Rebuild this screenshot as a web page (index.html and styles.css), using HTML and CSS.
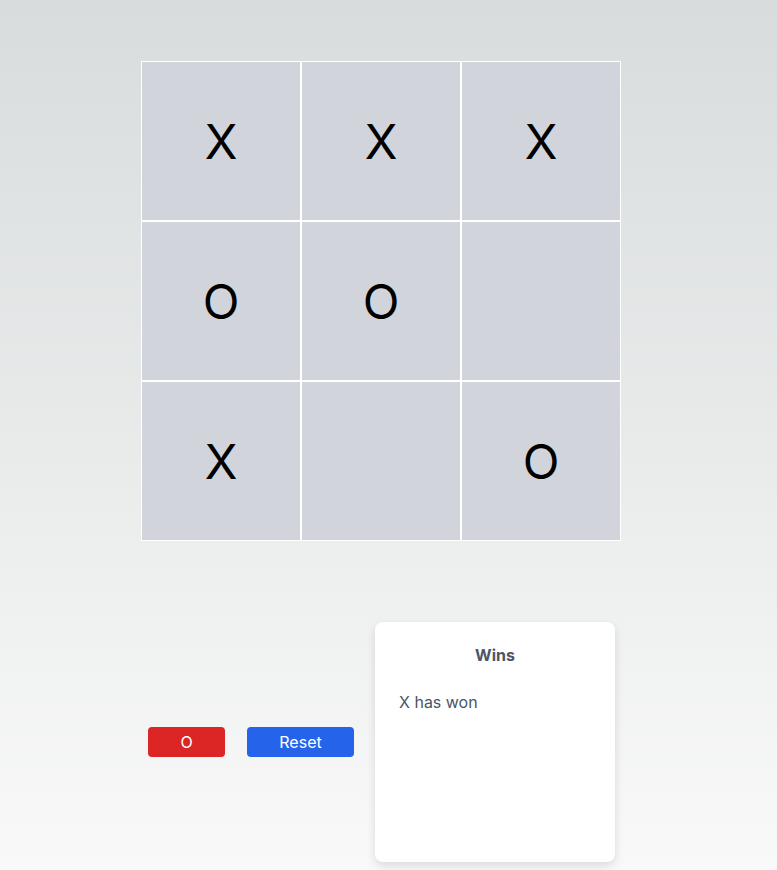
FILE: index.html
```html
<!DOCTYPE html>
<html>
<head>
<meta charset="utf-8">
<link rel="stylesheet" href="styles.css">
</head>
<body>
<div class="page">
  <div class="board">
    <div class="cell">X</div>
    <div class="cell">X</div>
    <div class="cell">X</div>
    <div class="cell">O</div>
    <div class="cell">O</div>
    <div class="cell"></div>
    <div class="cell">X</div>
    <div class="cell"></div>
    <div class="cell">O</div>
  </div>
  <div class="controls">
    <button class="btn btn-turn">O</button>
    <button class="btn btn-reset">Reset</button>
    <div class="card">
      <div class="card-title">Wins</div>
      <div class="card-text">X has won</div>
    </div>
  </div>
</div>
</body>
</html>
```
FILE: styles.css
```css
html, body {
  margin: 0;
  padding: 0;
}
body {
  font-family: Inter, "Noto Sans", sans-serif;
  background: linear-gradient(to bottom, #d8dcdc 0%, #f9f9f9 100%);
  min-height: 870px;
}
.page {
  padding-top: 61px;
}
.board {
  margin-left: 141px;
  width: 480px;
  display: grid;
  grid-template-columns: repeat(3, 160px);
  grid-template-rows: repeat(3, 160px);
}
.cell {
  box-sizing: border-box;
  border: 1px solid #ffffff;
  background: #d1d5db;
  display: flex;
  align-items: center;
  justify-content: center;
  font-size: 48px;
  color: #000;
  font-weight: 400;
}
.controls {
  margin-top: 81px;
  padding-left: 148px;
  display: flex;
  align-items: center;
}
.btn {
  height: 30px;
  border: none;
  border-radius: 4px;
  color: #fff;
  font-family: Inter, "Noto Sans", sans-serif;
  font-size: 16px;
  padding: 0;
}
.btn-turn {
  width: 77px;
  background: #dc2626;
}
.btn-reset {
  width: 107px;
  background: #2563eb;
  margin-left: 22px;
}
.card {
  margin-left: 21px;
  width: 240px;
  height: 240px;
  box-sizing: border-box;
  background: #fff;
  border-radius: 8px;
  box-shadow: 0 4px 10px rgba(0, 0, 0, 0.12);
  padding: 23px 24px;
  color: #4b5563;
}
.card-title {
  text-align: center;
  font-weight: 700;
  font-size: 16px;
  line-height: 20px;
}
.card-text {
  margin-top: 27px;
  font-size: 16px;
  line-height: 20px;
}
```
